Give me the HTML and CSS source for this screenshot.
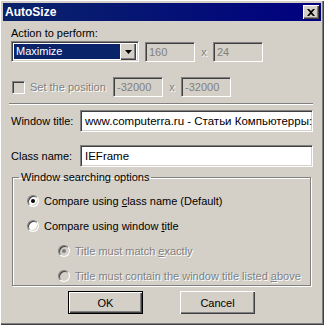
FILE: index.html
```html
<!DOCTYPE html>
<html lang="en">
<head>
<meta charset="UTF-8">
<title>AutoSize</title>
<link rel="stylesheet" href="styles.css">
</head>
<body>
<div class="window">
   <div class="titlebar">
      <span class="title">AutoSize</span>
      <span class="closebtn">
         <svg width="8" height="7" viewBox="0 0 8 7"><path d="M0 0h2l2 2 2-2h2L5 3.5 8 7H6L4 5 2 7H0l3-3.5z" fill="#000"/></svg>
      </span>
   </div>

   <div class="content">
      <div class="label-top">Action to perform:</div>

      <div class="row row-action">
         <div class="combo">
            <span class="combo-value">Maximize</span>
            <span class="combo-btn">
               <svg width="7" height="4" viewBox="0 0 7 4"><path d="M0 0h7L3.5 4z" fill="#000"/></svg>
            </span>
         </div>
         <div class="edit disabled w50 ml6">160</div>
         <span class="times disabled-text">x</span>
         <div class="edit disabled w50">24</div>
      </div>

      <div class="row row-pos">
         <span class="checkbox"></span>
         <span class="disabled-text pos-label">Set the position</span>
         <div class="edit disabled w50">-32000</div>
         <span class="times disabled-text">x</span>
         <div class="edit disabled w50">-32000</div>
      </div>

      <div class="separator"></div>

      <div class="row row-field">
         <label class="field-label">Window title:</label>
         <div class="edit wide">www.computerra.ru - Статьи Компьютерры: </div>
      </div>

      <div class="row row-field row-class">
         <label class="field-label">Class name:</label>
         <div class="edit wide">IEFrame</div>
      </div>

      <fieldset class="group">
         <legend>Window searching options</legend>
         <div class="option first"><span class="radio checked"></span><span>Compare using <u>c</u>lass name (Default)</span></div>
         <div class="option"><span class="radio"></span><span>Compare using window <u>t</u>itle</span></div>
         <div class="option sub"><span class="radio checked off"></span><span class="disabled-text">Title must match <u>e</u>xactly</span></div>
         <div class="option sub"><span class="radio off"></span><span class="disabled-text">Title must contain the window title listed <u>a</u>bove</span></div>
      </fieldset>

      <div class="buttons">
         <button class="btn default">OK</button>
         <button class="btn">Cancel</button>
      </div>
   </div>
</div>
</body>
</html>
```

FILE: styles.css
```css
html, body { margin: 0; padding: 0; }

body {
   width: 324px;
   height: 325px;
   font-family: "Liberation Sans", Arial, sans-serif;
   font-size: 11px;
   color: #000;
}

.window {
   box-sizing: border-box;
   width: 324px;
   height: 325px;
   padding: 3px 3px 0 3px;
   background: #d4d0c8;
   box-shadow: inset 1px 1px #fff, inset -1px -1px #404040, inset -2px -2px #808080;
}

.titlebar {
   height: 18px;
   display: flex;
   align-items: center;
   justify-content: space-between;
   padding: 0 2px 0 2px;
   background: linear-gradient(to right, #0a246a, #000080);
}

.title {
   color: #fff;
   font-weight: bold;
   font-size: 12px;
}

.closebtn {
   box-sizing: border-box;
   width: 16px;
   height: 14px;
   display: flex;
   align-items: center;
   justify-content: center;
   background: #d4d0c8;
   box-shadow: inset 1px 1px #fff, inset -1px -1px #404040, inset -2px -2px #808080;
}

.content {
   padding: 0 8px;
}

.label-top {
   margin-top: 5px;
   height: 14px;
   line-height: 14px;
}

.row {
   display: flex;
   align-items: center;
}

.row-action {
   margin-top: 1px;
   height: 21px;
}

.combo {
   box-sizing: border-box;
   width: 128px;
   height: 21px;
   display: flex;
   align-items: center;
   padding: 2px;
   background: #fff;
   border: 1px solid;
   border-color: #808080 #fff #fff #808080;
   box-shadow: inset 1px 1px #404040, inset -1px -1px #d4d0c8;
}

.combo-value {
   flex: 1;
   height: 15px;
   line-height: 15px;
   padding-left: 2px;
   background: #0a246a;
   color: #fff;
}

.combo-btn {
   box-sizing: border-box;
   width: 16px;
   height: 17px;
   display: flex;
   align-items: center;
   justify-content: center;
   background: #d4d0c8;
   box-shadow: inset 1px 1px #fff, inset -1px -1px #404040, inset -2px -2px #808080;
}

.edit {
   box-sizing: border-box;
   height: 20px;
   line-height: 16px;
   padding: 1px 3px;
   background: #fff;
   border: 1px solid;
   border-color: #808080 #fff #fff #808080;
   box-shadow: inset 1px 1px #404040, inset -1px -1px #d4d0c8;
   white-space: nowrap;
   overflow: hidden;
}

.edit.disabled {
   background: #d4d0c8;
   color: #808080;
}

.w50 { width: 50px; }
.ml6 { margin-left: 6px; }

.times {
   width: 18px;
   text-align: center;
}

.disabled-text {
   color: #808080;
   text-shadow: 1px 1px 0 #fff;
}

.row-pos {
   margin-top: 15px;
   height: 20px;
}

.checkbox {
   box-sizing: border-box;
   width: 13px;
   height: 13px;
   margin-left: 1px;
   background: #d4d0c8;
   border: 1px solid;
   border-color: #808080 #fff #fff #808080;
   box-shadow: inset 1px 1px #404040, inset -1px -1px #d4d0c8;
}

.pos-label {
   width: 83px;
   margin-left: 5px;
}

.separator {
   margin: 6px 0 0 -2px;
   width: 304px;
   height: 0;
   border-top: 1px solid #808080;
   border-bottom: 1px solid #fff;
}

.row-field {
   margin-top: 5px;
   height: 22px;
}

.row-class {
   margin-top: 13px;
}

.field-label {
   width: 69px;
}

.edit.wide {
   width: 233px;
   height: 22px;
   line-height: 18px;
   padding-left: 4px;
   font-size: 11.5px;
   text-overflow: clip;
}

.group {
   margin: 4px 0 0 1px;
   padding: 0;
   width: 299px;
   height: 115px;
   box-sizing: border-box;
   border: 1px solid #808080;
   box-shadow: inset 1px 1px #fff, 1px 1px #fff;
}

.group legend {
   margin-left: 6px;
   padding: 0 2px;
   line-height: 13px;
}

.option {
   display: flex;
   align-items: center;
   height: 13px;
   margin: 12px 0 0 14px;
}

.option.first { margin-top: 10px; }

.option.sub { margin-left: 45px; }

.radio {
   position: relative;
   box-sizing: border-box;
   width: 12px;
   height: 12px;
   margin-right: 5px;
   border-radius: 50%;
   background: #fff;
   border: 1px solid;
   border-color: #808080 #fff #fff #808080;
   box-shadow: inset 1px 1px #404040, inset -1px -1px #d4d0c8;
}

.radio.off { background: #d4d0c8; }

.radio.checked::after {
   content: "";
   position: absolute;
   left: 3px;
   top: 3px;
   width: 4px;
   height: 4px;
   border-radius: 50%;
   background: #000;
}

.radio.off.checked::after { background: #808080; }

.buttons {
   display: flex;
   gap: 37px;
   margin: 5px 0 0 57px;
}

.btn {
   box-sizing: border-box;
   width: 75px;
   height: 23px;
   padding: 0;
   font-family: inherit;
   font-size: 11px;
   color: #000;
   background: #d4d0c8;
   border: none;
   box-shadow: inset 1px 1px #fff, inset -1px -1px #404040, inset -2px -2px #808080;
}

.btn.default {
   border: 1px solid #000;
}
```
